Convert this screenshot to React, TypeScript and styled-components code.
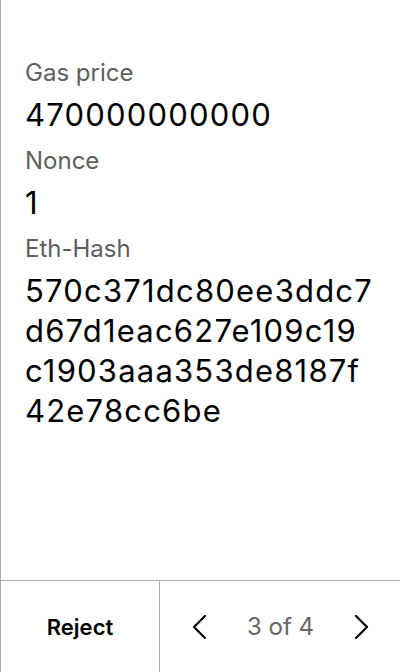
import React from 'react';
import styled, { createGlobalStyle } from 'styled-components';

const GlobalStyle = createGlobalStyle`
  html, body {
    margin: 0;
    padding: 0;
    background: #fff;
    font-family: Inter, 'Noto Sans', sans-serif;
  }
`;

const Screen = styled.div`
  width: 400px;
  height: 672px;
  box-sizing: border-box;
  border-left: 1px solid #ababab;
  display: flex;
  flex-direction: column;
`;

const Details = styled.div`
  flex: 1;
  padding: 57px 27px 0 24px;
`;

const Label = styled.div`
  font-size: 24px;
  line-height: 32px;
  color: #5e5e5e;
  margin-bottom: 6px;
`;

const Value = styled.div`
  font-size: 31px;
  line-height: 40px;
  letter-spacing: 1.2px;
  color: #000;
  margin-bottom: 10px;
  word-break: break-all;
`;

const Footer = styled.div`
  height: 92px;
  box-sizing: border-box;
  border-top: 1px solid #ababab;
  display: grid;
  grid-template-columns: 159px 1fr;
`;

const RejectButton = styled.button`
  border: none;
  border-right: 1px solid #ababab;
  background: none;
  font-family: inherit;
  font-size: 22px;
  font-weight: 600;
  color: #000;
  padding: 0;
  cursor: pointer;
`;

const Pager = styled.div`
  display: flex;
  align-items: center;
  justify-content: space-between;
  padding: 0 31px 0 32px;
`;

const PageText = styled.span`
  font-size: 24px;
  color: #666;
`;

const ArrowButton = styled.button`
  border: none;
  background: none;
  padding: 0;
  width: 14px;
  height: 24px;
  display: flex;
  cursor: pointer;
`;

const Chevron = ({ dir }: { dir: 'left' | 'right' }) => (
  <svg width="14" height="24" viewBox="0 0 14 24" fill="none">
    <polyline
      points={dir === 'left' ? '13,1 2,12 13,23' : '1,1 12,12 1,23'}
      stroke="#000"
      strokeWidth="2.2"
      strokeLinecap="round"
      strokeLinejoin="round"
    />
  </svg>
);

const fields = [
  { label: 'Gas price', value: '470000000000' },
  { label: 'Nonce', value: '1' },
  {
    label: 'Eth-Hash',
    value: '570c371dc80ee3ddc7d67d1eac627e109c19c1903aaa353de8187f42e78cc6be',
  },
];

export default function App() {
  return (
    <>
      <GlobalStyle />
      <Screen>
        <Details>
          {fields.map((f) => (
            <React.Fragment key={f.label}>
              <Label>{f.label}</Label>
              <Value>{f.value}</Value>
            </React.Fragment>
          ))}
        </Details>
        <Footer>
          <RejectButton>Reject</RejectButton>
          <Pager>
            <ArrowButton aria-label="Previous">
              <Chevron dir="left" />
            </ArrowButton>
            <PageText>3 of 4</PageText>
            <ArrowButton aria-label="Next">
              <Chevron dir="right" />
            </ArrowButton>
          </Pager>
        </Footer>
      </Screen>
    </>
  );
}
